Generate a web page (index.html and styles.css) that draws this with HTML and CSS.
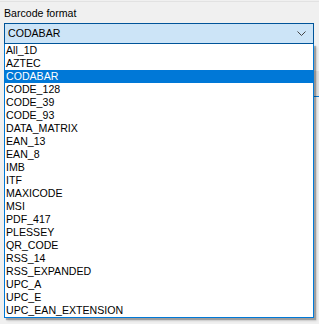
FILE: index.html
```html
<!DOCTYPE html>
<html lang="en">
<head>
    <meta charset="UTF-8">
    <title>Barcode format</title>
    <link rel="stylesheet" href="styles.css">
</head>
<body>
    <div class="panel">
        <div class="behind"></div>
        <label class="caption">Barcode format</label>
        <div class="combo">
            <span class="combo-text">CODABAR</span>
            <svg class="chevron" width="9" height="5" viewBox="0 0 9 5">
                <path d="M0.5 0.5 L4.5 4.5 L8.5 0.5" fill="none" stroke="#444" stroke-width="1"/>
            </svg>
        </div>
        <ul class="list">
            <li>All_1D</li>
            <li>AZTEC</li>
            <li class="selected">CODABAR</li>
            <li>CODE_128</li>
            <li>CODE_39</li>
            <li>CODE_93</li>
            <li>DATA_MATRIX</li>
            <li>EAN_13</li>
            <li>EAN_8</li>
            <li>IMB</li>
            <li>ITF</li>
            <li>MAXICODE</li>
            <li>MSI</li>
            <li>PDF_417</li>
            <li>PLESSEY</li>
            <li>QR_CODE</li>
            <li>RSS_14</li>
            <li>RSS_EXPANDED</li>
            <li>UPC_A</li>
            <li>UPC_E</li>
            <li>UPC_EAN_EXTENSION</li>
        </ul>
    </div>
</body>
</html>
```

FILE: styles.css
```css
body {
    margin: 0;
    background-color: #f0f0f0;
    font-family: "Liberation Sans", Arial, sans-serif;
    font-size: 10.6px;
    color: #000;
}
.panel {
    position: relative;
    width: 319px;
    height: 324px;
    border-top: 1px solid #e2e2e2;
    margin-top: 1px;
    padding: 0 0 0 4px;
    box-sizing: border-box;
}
.behind {
    position: absolute;
    left: 300px;
    top: 69px;
    width: 30px;
    height: 25px;
    background-color: #e1e1e1;
    border-bottom: 1px solid #0078d7;
}
.caption {
    display: block;
    padding-top: 5px;
    height: 15px;
    line-height: 13px;
    margin-bottom: 1px;
}
.combo {
    position: relative;
    display: flex;
    align-items: center;
    justify-content: space-between;
    width: 310px;
    height: 21px;
    box-sizing: border-box;
    background-color: #cce4f7;
    border: 1px solid #005499;
    padding: 0 7px 0 3px;
}
.combo-text {
    line-height: 13px;
}
.chevron {
    display: block;
}
.list {
    position: relative;
    list-style: none;
    margin: 0;
    padding: 0;
    width: 310px;
    box-sizing: border-box;
    background-color: #fff;
    border: 1px solid #0078d7;
    border-top: none;
    box-shadow: 2px 2px 1px rgba(0, 0, 0, 0.25), 3px 3px 2px rgba(0, 0, 0, 0.12);
}
.list li {
    height: 13px;
    line-height: 13px;
    padding-left: 1px;
    white-space: nowrap;
}
.list li.selected {
    background-color: #0078d7;
    color: #fff;
}
```
